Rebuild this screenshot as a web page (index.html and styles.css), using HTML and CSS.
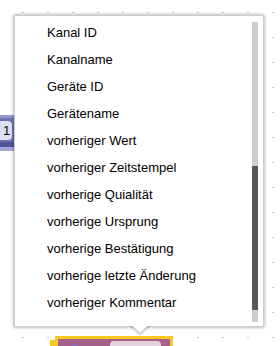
FILE: index.html
```html
<!DOCTYPE html>
<html lang="de">
<head>
<meta charset="utf-8">
<title>Blockly Dropdown</title>
<link rel="stylesheet" href="styles.css">
</head>
<body>
<div class="workspace">
  <div class="block-left">
    <div class="block-left-field">1</div>
  </div>
  <div class="block-bottom">
    <div class="block-bottom-tab"></div>
    <div class="block-bottom-body">
      <svg class="block-bottom-icon" width="10" height="10" viewBox="0 0 10 10"><path d="M5 1 L9 9 L1 9 Z" fill="#7d6fd0"/></svg>
      <div class="block-bottom-field"></div>
    </div>
  </div>
  <div class="dropdown">
    <div class="dropdown-inner">
      <ul class="menu">
        <li class="menu-item">Kanal ID</li>
        <li class="menu-item">Kanalname</li>
        <li class="menu-item">Geräte ID</li>
        <li class="menu-item">Gerätename</li>
        <li class="menu-item">vorheriger Wert</li>
        <li class="menu-item">vorheriger Zeitstempel</li>
        <li class="menu-item">vorherige Quialität</li>
        <li class="menu-item">vorherige Ursprung</li>
        <li class="menu-item">vorherige Bestätigung</li>
        <li class="menu-item">vorherige letzte Änderung</li>
        <li class="menu-item">vorheriger Kommentar</li>
      </ul>
      <div class="scrollbar">
        <div class="scroll-track-top"></div>
        <div class="scroll-thumb"></div>
        <div class="scroll-track-bottom"></div>
      </div>
    </div>
    <div class="dropdown-arrow"></div>
  </div>
</div>
</body>
</html>
```
FILE: styles.css
```css
* { box-sizing: border-box; }
html, body { margin: 0; padding: 0; }
body {
  width: 280px;
  height: 346px;
  overflow: hidden;
  background: #fff;
  font-family: "Liberation Sans", Arial, sans-serif;
}
.workspace {
  position: relative;
  width: 280px;
  height: 346px;
  background-color: #fff;
  background-image: radial-gradient(circle at 0.5px 0.5px, #8c8c8c 0.6px, transparent 0.9px);
  background-size: 25px 25px;
  background-position: 22.5px 12px;
  overflow: hidden;
}
.block-left {
  position: absolute;
  left: -10px;
  top: 115px;
  width: 25px;
  height: 36px;
  background: #6a74b4;
  border-top: 3px solid #9098cf;
  border-bottom: 4px solid #a3a9d8;
  box-shadow: inset 0 -5px 0 #4b5598;
}
.block-left-field {
  margin: 3px 0 0 4px;
  width: 18px;
  height: 19px;
  background: #dde0f1;
  border-radius: 4px;
  color: #000;
  font-size: 13px;
  line-height: 19px;
  padding-left: 9px;
}
.block-bottom {
  position: absolute;
  left: 50px;
  top: 336px;
  display: flex;
  align-items: flex-start;
}
.block-bottom-tab {
  width: 5px;
  height: 8px;
  margin-top: 4px;
  background: #f7c81f;
}
.block-bottom-body {
  width: 118px;
  height: 20px;
  background: #a5618a;
  border: 3px solid #f7c81f;
  display: flex;
  align-items: flex-start;
  padding: 2px 0 0 12px;
  gap: 30px;
}
.block-bottom-icon { display: block; }
.block-bottom-field {
  width: 51px;
  height: 14px;
  background: #e3d3dd;
  border-radius: 4px;
}
.dropdown {
  position: absolute;
  left: 14px;
  top: 15px;
  width: 250px;
  height: 312px;
  background: #fff;
  border: 1px solid rgba(0,0,0,0.2);
  border-radius: 2px;
  box-shadow: 0 0 3px 1px rgba(0,0,0,0.25);
}
.dropdown-inner {
  position: relative;
  z-index: 2;
  background: #fff;
  height: 100%;
  display: flex;
  padding: 6px 5px 4px 0;
}
.menu {
  list-style: none;
  margin: 0;
  padding: 0;
  flex: 1;
}
.menu-item {
  height: 27px;
  line-height: 27px;
  padding-left: 32px;
  font-size: 13px;
  color: #000;
  white-space: nowrap;
}
.menu-item:first-child { margin-top: -3px; }
.scrollbar {
  width: 6px;
  display: flex;
  flex-direction: column;
}
.scroll-track-top { height: 144px; background: #cdcdcd; }
.scroll-thumb { height: 144px; background: #585858; }
.scroll-track-bottom { flex: 1; background: #cdcdcd; }
.dropdown-arrow {
  position: absolute;
  z-index: 1;
  left: 117px;
  top: 299px;
  width: 16px;
  height: 16px;
  background: #fff;
  border-right: 1px solid rgba(0,0,0,0.2);
  border-bottom: 1px solid rgba(0,0,0,0.2);
  box-shadow: 1px 1px 2px rgba(0,0,0,0.2);
  transform: rotate(45deg);
}
```
